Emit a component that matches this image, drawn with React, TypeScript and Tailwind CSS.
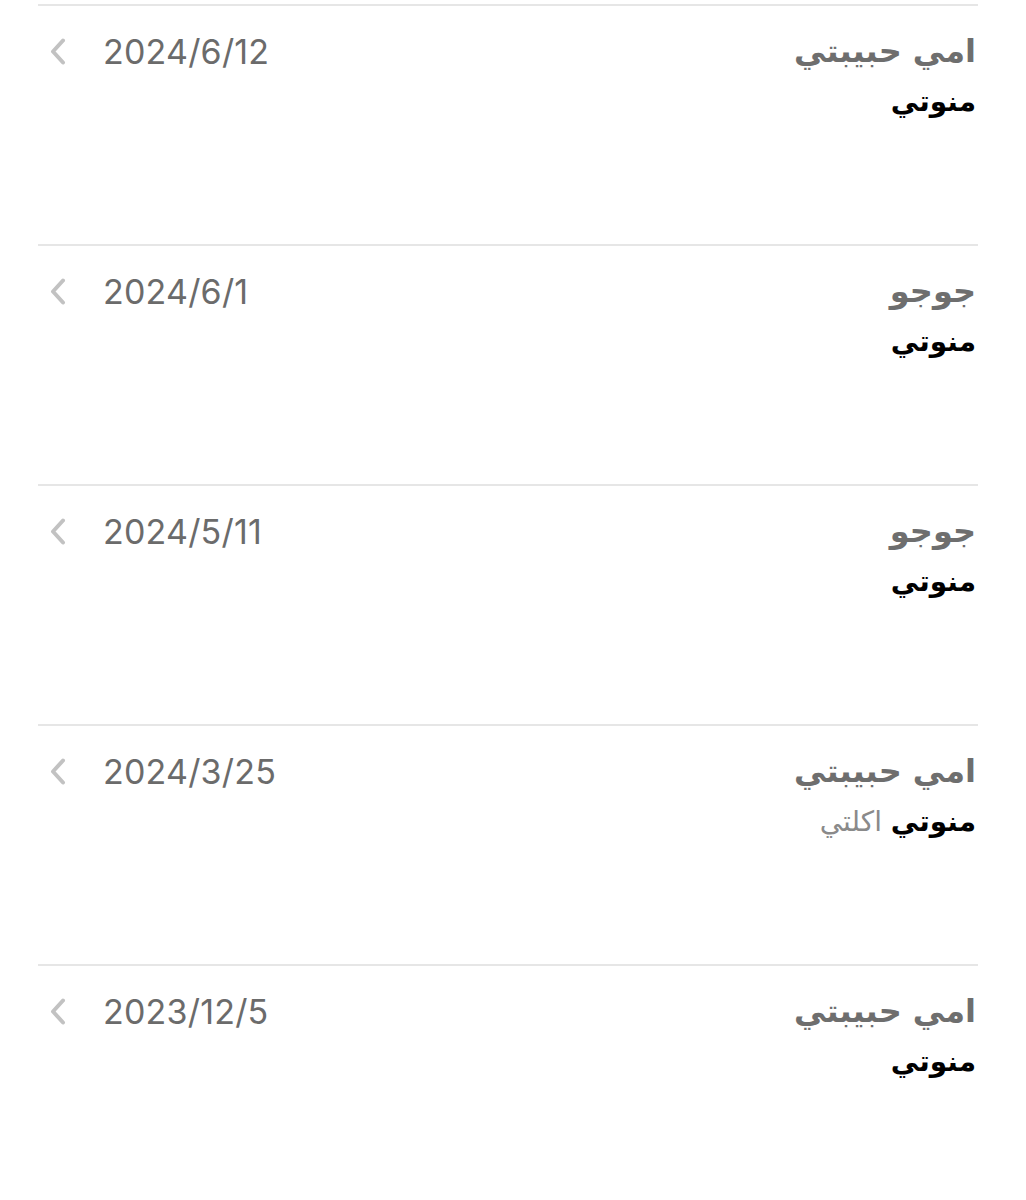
import React from 'react';

type Entry = {
  title: string;
  date: string;
  sub: string;
  extra?: string;
};

const entries: Entry[] = [
  { title: 'امي حبيبتي', date: '2024/6/12', sub: 'منوتي' },
  { title: 'جوجو', date: '2024/6/1', sub: 'منوتي' },
  { title: 'جوجو', date: '2024/5/11', sub: 'منوتي' },
  { title: 'امي حبيبتي', date: '2024/3/25', sub: 'منوتي', extra: 'اكلتي' },
  { title: 'امي حبيبتي', date: '2023/12/5', sub: 'منوتي' },
];

const Chevron = () => (
  <svg width="18" height="28" viewBox="0 0 18 28" fill="none" className="shrink-0">
    <path d="M14 2.5 L4 13.5 L14 24.5" stroke="#c2c2c2" strokeWidth="4" strokeLinecap="round" strokeLinejoin="round" />
  </svg>
);

const Row: React.FC<{ entry: Entry }> = ({ entry }) => (
  <div className="h-[240px] border-t-2 border-[#e6e6e6] flex justify-between items-start">
    <div className="flex items-center pl-[11px] pt-[26px]">
      <Chevron />
      <span className="ml-[36px] text-[34px] leading-[40px] text-[#6b6b6b] tracking-[0.2px]" style={{ fontFamily: 'Inter, "Liberation Sans", sans-serif' }}>
        {entry.date}
      </span>
    </div>
    <div dir="rtl" className="pt-[20px] text-right pr-[2px]" style={{ fontFamily: '"DejaVu Sans", "Noto Sans", sans-serif' }}>
      <div className="text-[32px] leading-[50px] font-bold text-[#6e6e6e]">{entry.title}</div>
      <div className="text-[28px] leading-[48px] mt-[2px]">
        <span className="font-bold text-black">{entry.sub}</span>
        {entry.extra && <span className="text-[#8a8a8a]"> {entry.extra}</span>}
      </div>
    </div>
  </div>
);

export default function App() {
  return (
    <div className="w-[1026px] h-[1200px] bg-white pt-[4px] pl-[38px] pr-[48px] overflow-hidden">
      {entries.map((e, i) => (
        <Row key={i} entry={e} />
      ))}
    </div>
  );
}
